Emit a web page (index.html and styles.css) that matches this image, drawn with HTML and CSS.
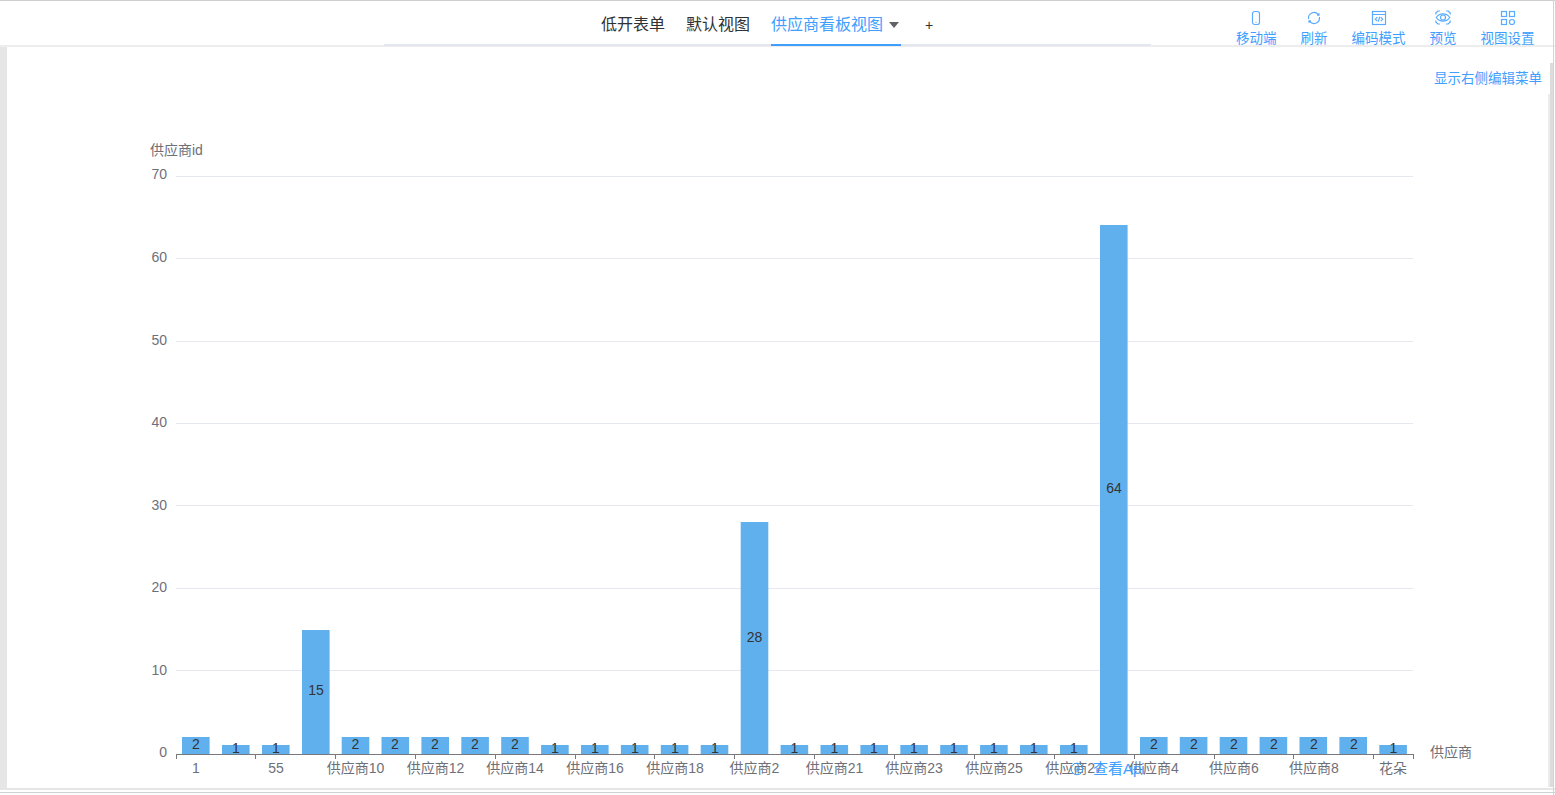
FILE: index.html
```html
<!DOCTYPE html>
<html lang="zh-CN">
<head>
<meta charset="utf-8">
<title>供应商看板视图</title>
<link rel="stylesheet" href="styles.css">
</head>
<body>
<div class="app">
  <header class="topbar">
    <div class="spacer-left"></div>
    <nav class="tabs">
      <a class="tab">低开表单</a>
      <a class="tab">默认视图</a>
      <a class="tab tab-active">供应商看板视图<span class="caret"></span></a>
      <a class="tab tab-add">+</a>
    </nav>
    <div class="tools">
      <a class="tool"><svg viewBox="0 0 16 16" class="ico"><rect x="4.500" y="1.500" width="7" height="13" rx="2.200"/><path d="M7.500 12.500h1"/></svg>移动端</a>
      <a class="tool"><svg viewBox="0 0 16 16" class="ico"><path d="M2.600 9A5.500 5.500 0 0 1 12.300 4.600M13.400 7A5.500 5.500 0 0 1 3.700 11.400M13 3.200v2h-2M3 12.800v-2h2"/></svg>刷新</a>
      <a class="tool"><svg viewBox="0 0 16 16" class="ico"><rect x="1.500" y="1.500" width="13" height="13"/><path d="M1.500 4.500h13M6.300 7.200l-2 2 2 2M9.700 7.200l2 2-2 2M8.800 6.800l-1.600 4.800"/></svg>编码模式</a>
      <a class="tool"><svg viewBox="0 0 16 16" class="ico"><path d="M.8 4.500V3L2.800 1H5M11 1h2.200l2 2v1.500M15.200 10.500V12l-2 2H11M5 14H2.800l-2-2v-1.500M1.300 7.500c3-4.800 10.400-4.800 13.400 0-3 4.800-10.400 4.800-13.400 0z"/><circle cx="8" cy="7.500" r="2.500"/></svg>预览</a>
      <a class="tool"><svg viewBox="0 0 16 16" class="ico"><rect x="1.500" y="1.500" width="5" height="5"/><rect x="9.500" y="1.500" width="5" height="5"/><rect x="1.500" y="9.500" width="5" height="5"/><circle cx="12" cy="12" r="2.500"/></svg>视图设置</a>
    </div>
  </header>
  <main class="body">
    <div class="left-strip"></div>
    <section class="content">
      <a class="edit-link">显示右侧编辑菜单</a>
      <svg class="chart" width="1555" height="795" viewBox="0 0 1555 795">
        <text class="axis-name" x="150" y="155">供应商id</text>
        <g class="grid">
          <path d="M176 176.500H1413M176 258.500H1413M176 341.500H1413M176 423.500H1413M176 505.500H1413M176 588.500H1413M176 670.500H1413"/>
        </g>
        <g class="ylab">
          <text x="167" y="178.500">70</text><text x="167" y="261.500">60</text><text x="167" y="344.500">50</text><text x="167" y="426.500">40</text><text x="167" y="509.500">30</text><text x="167" y="591.500">20</text><text x="167" y="674.500">10</text><text x="167" y="756.500">0</text>
        </g>
        <g class="bars">
          <rect x="182" y="737" height="17"/><rect x="222" y="745" height="9"/><rect x="262" y="745" height="9"/><rect x="302" y="630" height="124"/><rect x="341.700" y="737" height="17"/><rect x="381.500" y="737" height="17"/><rect x="421.400" y="737" height="17"/><rect x="461.300" y="737" height="17"/><rect x="501.200" y="737" height="17"/><rect x="541.100" y="745" height="9"/><rect x="581" y="745" height="9"/><rect x="620.900" y="745" height="9"/><rect x="660.800" y="745" height="9"/><rect x="700.700" y="745" height="9"/><rect x="740.700" y="522" height="232"/><rect x="780.600" y="745" height="9"/><rect x="820.500" y="745" height="9"/><rect x="860.400" y="745" height="9"/><rect x="900.300" y="745" height="9"/><rect x="940.200" y="745" height="9"/><rect x="980.100" y="745" height="9"/><rect x="1020" y="745" height="9"/><rect x="1060" y="745" height="9"/><rect x="1100" y="225" height="529"/><rect x="1140" y="737" height="17"/><rect x="1179.800" y="737" height="17"/><rect x="1219.700" y="737" height="17"/><rect x="1259.600" y="737" height="17"/><rect x="1299.500" y="737" height="17"/><rect x="1339.400" y="737" height="17"/><rect x="1379.300" y="745" height="9"/>
        </g>
        <g class="vals">
          <text x="196" y="749">2</text><text x="236" y="753">1</text><text x="276" y="753">1</text><text x="316" y="695">15</text><text x="355.500" y="749">2</text><text x="395" y="749">2</text><text x="435" y="749">2</text><text x="475" y="749">2</text><text x="515" y="749">2</text><text x="555" y="753">1</text><text x="595" y="753">1</text><text x="635" y="753">1</text><text x="675" y="753">1</text><text x="715" y="753">1</text><text x="754.500" y="642">28</text><text x="794.500" y="753">1</text><text x="834.500" y="753">1</text><text x="874" y="753">1</text><text x="914" y="753">1</text><text x="954" y="753">1</text><text x="994" y="753">1</text><text x="1034" y="753">1</text><text x="1074" y="753">1</text><text x="1114" y="493">64</text><text x="1154" y="749">2</text><text x="1194" y="749">2</text><text x="1234" y="749">2</text><text x="1274" y="749">2</text><text x="1314" y="749">2</text><text x="1354" y="749">2</text><text x="1393.500" y="753">1</text>
        </g>
        <path class="axis" d="M176 754.500H1413.500M176.500 754V759M255.500 754V759M335.500 754V759M415.500 754V759M495.500 754V759M575.500 754V759M654.500 754V759M734.500 754V759M814.500 754V759M894.500 754V759M974.500 754V759M1054.500 754V759M1134.500 754V759M1214.500 754V759M1293.500 754V759M1373.500 754V759M1413.500 754V759"/>
        <g class="xlab">
          <text x="196" y="773">1</text><text x="276" y="773">55</text><text x="355.500" y="773">供应商10</text><text x="435.500" y="773">供应商12</text><text x="515" y="773">供应商14</text><text x="595" y="773">供应商16</text><text x="675" y="773">供应商18</text><text x="754.500" y="773">供应商2</text><text x="834.500" y="773">供应商21</text><text x="914" y="773">供应商23</text><text x="994" y="773">供应商25</text><text x="1074" y="773">供应商27</text><text x="1154" y="773">供应商4</text><text x="1234" y="773">供应商6</text><text x="1314" y="773">供应商8</text><text x="1393" y="773">花朵</text>
        </g>
        <text class="axis-name" x="1430" y="757">供应商</text>
      </svg>
      <a class="api-link"><svg viewBox="0 0 16 16" class="api-ico"><circle cx="8" cy="8" r="5.800"/><circle cx="8" cy="8" r="2.200"/></svg>查看Api</a>
    </section>
    <div class="scroll-track"></div>
    <div class="scroll-thumb"></div>
    <div class="edge-line"></div>
  </main>
  <footer class="bottom"></footer>
</div>
</body>
</html>
```
FILE: styles.css
```css
* { box-sizing: border-box; }
html, body { margin: 0; height: 100%; overflow: hidden; background: #fff; }
body { font-family: "Liberation Sans", "Noto Sans CJK SC", sans-serif; font-size: 14px; color: #303133; }
.app { width: 1555px; height: 795px; display: flex; flex-direction: column; position: relative; }
.topbar { height: 47px; flex: none; display: flex; border-top: 1px solid #cfcfcf; border-bottom: 2px solid #ededed; position: relative; }
.spacer-left { width: 384px; flex: none; }
.tabs { width: 767px; height: 45px; flex: none; display: flex; gap: 21px; padding-left: 217px; border-bottom: 2px solid #e4e7ed; }
.tab { height: 45px; flex: none; line-height: 47px; font-size: 16px; color: #303133; white-space: nowrap; }
.tab-active { color: #409eff; border-bottom: 2px solid #409eff; width: 130px; }
.caret { display: inline-block; width: 0; height: 0; border-left: 5px solid transparent; border-right: 5px solid transparent; border-top: 6px solid #606266; margin-left: 6px; vertical-align: 2px; }
.tab-add { font-size: 14px; line-height: 48px; color: #303133; padding-left: 3px; }
.tools { flex: 1; display: flex; padding-left: 85px; gap: 24px; color: #409eff; }
.tool { display: flex; flex-direction: column; align-items: center; font-size: 13.5px; line-height: 18px; padding-top: 9px; white-space: nowrap; color: #409eff; }
.ico { width: 16px; height: 16px; margin-bottom: 4px; flex: none; fill: none; stroke: #5aabff; stroke-width: 1.2; }
.body { flex: 1; display: flex; position: relative; min-height: 0; }
.left-strip { width: 7px; flex: none; background: #e6e6e6; }
.content { flex: 1; background: #fff; }
.scroll-track { position: absolute; left: 1550px; top: 16px; bottom: 1px; width: 3px; background: #dcdcdc; }
.scroll-thumb { position: absolute; left: 1548px; top: 47px; bottom: 1px; width: 2px; background: #ececec; }
.edge-line { position: absolute; left: 1553px; top: -47px; bottom: -7px; width: 1px; background: #d4d4d4; }
.chart { position: absolute; left: 0; top: -47px; }
.edit-link { position: absolute; left: 1434px; top: 23px; font-size: 13.5px; line-height: 18px; color: #409eff; z-index: 1; white-space: nowrap; }
.api-link { position: absolute; left: 1069px; top: 713px; font-size: 15px; line-height: 18px; color: #409eff; display: flex; align-items: center; gap: 8px; }
.api-ico { width: 16px; height: 16px; fill: none; stroke: #409eff; }
.bottom { height: 7px; flex: none; background: #fff; border-top: 2px solid #e6e6e6; box-shadow: inset 0 2px 0 #fff, inset 0 3px 0 #d0d0d0; }
.grid path { stroke: #e6e8f1; stroke-width: 1; fill: none; }
.chart text { font-family: "Liberation Sans", "Noto Sans CJK SC", sans-serif; font-size: 14px; fill: #6e7079; }
.ylab text { text-anchor: end; }
.xlab text { text-anchor: middle; }
.bars rect { fill: #61b0ee; width: 27.6px; }
.chart .vals text { text-anchor: middle; fill: #333; }
.axis { stroke: #77797f; stroke-width: 1; fill: none; }
```
